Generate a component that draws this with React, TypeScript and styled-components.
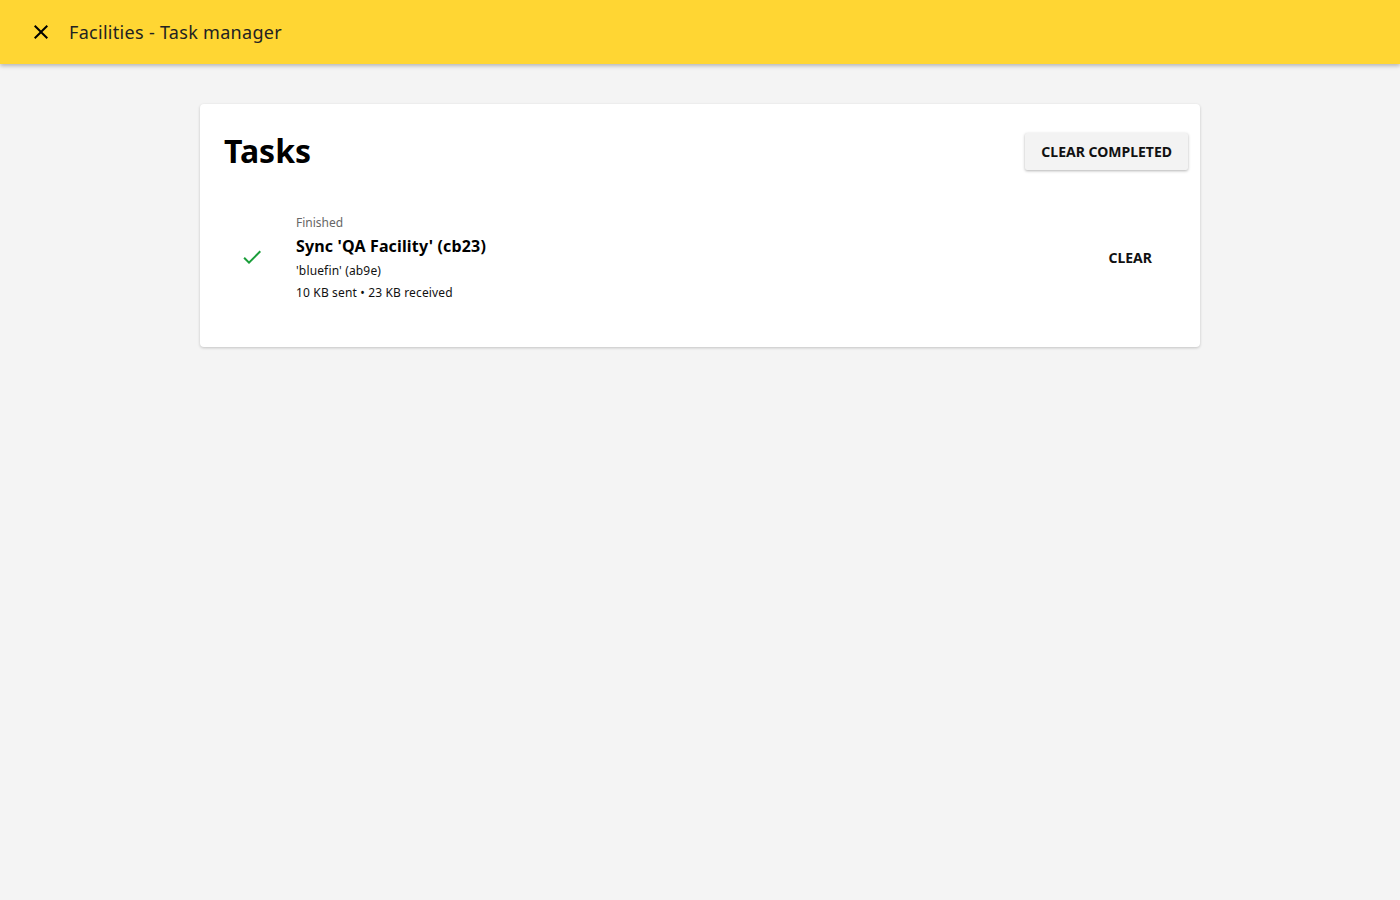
import React from "react";
import styled, { createGlobalStyle } from "styled-components";

const GlobalStyle = createGlobalStyle`
  html, body {
    margin: 0;
    padding: 0;
    background: #f4f4f4;
    font-family: "Noto Sans", "Open Sans", sans-serif;
    color: #000;
  }
`;

const Page = styled.div`
  min-height: 900px;
  background: #f4f4f4;
`;

const AppBar = styled.header`
  height: 64px;
  background: #ffd633;
  display: flex;
  align-items: center;
  padding: 0 16px 0 17px;
  box-shadow: 0 2px 4px rgba(0, 0, 0, 0.25);
  position: relative;
  z-index: 1;
`;

const IconButton = styled.button`
  width: 48px;
  height: 48px;
  border: none;
  background: transparent;
  display: flex;
  align-items: center;
  justify-content: center;
  padding: 0;
  margin-right: 4px;
  cursor: pointer;
  color: #000;
`;

const AppTitle = styled.h1`
  margin: 0;
  font-size: 18px;
  letter-spacing: 0.3px;
  font-weight: 400;
  color: #222;
`;

const Main = styled.main`
  display: flex;
  justify-content: center;
  padding-top: 40px;
`;

const Card = styled.section`
  width: 1000px;
  background: #fff;
  border-radius: 4px;
  box-shadow: 0 1px 3px rgba(0, 0, 0, 0.2);
  padding: 24px 12px 43px 24px;
  box-sizing: border-box;
`;

const CardHeader = styled.div`
  display: flex;
  align-items: center;
  justify-content: space-between;
`;

const Heading = styled.h2`
  margin: 0;
  font-size: 32px;
  font-weight: 700;
  line-height: 46px;
`;

const RaisedButton = styled.button`
  font-family: inherit;
  font-size: 14px;
  font-weight: 700;
  color: #111;
  background: #f3f3f3;
  border: none;
  border-radius: 2px;
  height: 37px;
  padding: 0 16px;
  box-shadow: 0 1px 3px rgba(0, 0, 0, 0.3);
  cursor: pointer;
`;

const FlatButton = styled(RaisedButton)`
  background: transparent;
  box-shadow: none;
  padding: 0 12px;
  margin-right: 24px;
`;

const TaskRow = styled.div`
  display: flex;
  align-items: center;
  margin-top: 36px;
`;

const StatusIcon = styled.div`
  width: 56px;
  display: flex;
  justify-content: center;
  color: #1a9e3a;
`;

const TaskBody = styled.div`
  flex: 1;
  padding: 4px 0 0 16px;
  display: flex;
  flex-direction: column;
`;

const Status = styled.div`
  font-size: 12px;
  color: #666;
  line-height: 18px;
`;

const TaskTitle = styled.div`
  font-size: 16px;
  font-weight: 700;
  letter-spacing: 0.15px;
  line-height: 24px;
  margin-top: 2px;
`;

const Detail = styled.div<{ $first?: boolean }>`
  font-size: 12px;
  letter-spacing: 0.15px;
  line-height: 22px;
  color: #111;
  margin-top: ${(p) => (p.$first ? "2px" : "0")};
`;

const CheckIcon = () => (
  <svg width="24" height="24" viewBox="0 0 24 24" fill="currentColor">
    <path d="M9 16.17L4.83 12l-1.42 1.41L9 19 21 7l-1.41-1.41z" />
  </svg>
);

const CloseIcon = () => (
  <svg width="24" height="24" viewBox="0 0 24 24" fill="currentColor">
    <path d="M19 6.41L17.59 5 12 10.59 6.41 5 5 6.41 10.59 12 5 17.59 6.41 19 12 13.41 17.59 19 19 17.59 13.41 12z" />
  </svg>
);

export default function App() {
  return (
    <Page>
      <GlobalStyle />
      <AppBar>
        <IconButton aria-label="Close">
          <CloseIcon />
        </IconButton>
        <AppTitle>Facilities - Task manager</AppTitle>
      </AppBar>
      <Main>
        <Card>
          <CardHeader>
            <Heading>Tasks</Heading>
            <RaisedButton>CLEAR COMPLETED</RaisedButton>
          </CardHeader>
          <TaskRow>
            <StatusIcon>
              <CheckIcon />
            </StatusIcon>
            <TaskBody>
              <Status>Finished</Status>
              <TaskTitle>Sync 'QA Facility' (cb23)</TaskTitle>
              <Detail $first>'bluefin' (ab9e)</Detail>
              <Detail>10 KB sent • 23 KB received</Detail>
            </TaskBody>
            <FlatButton>CLEAR</FlatButton>
          </TaskRow>
        </Card>
      </Main>
    </Page>
  );
}
